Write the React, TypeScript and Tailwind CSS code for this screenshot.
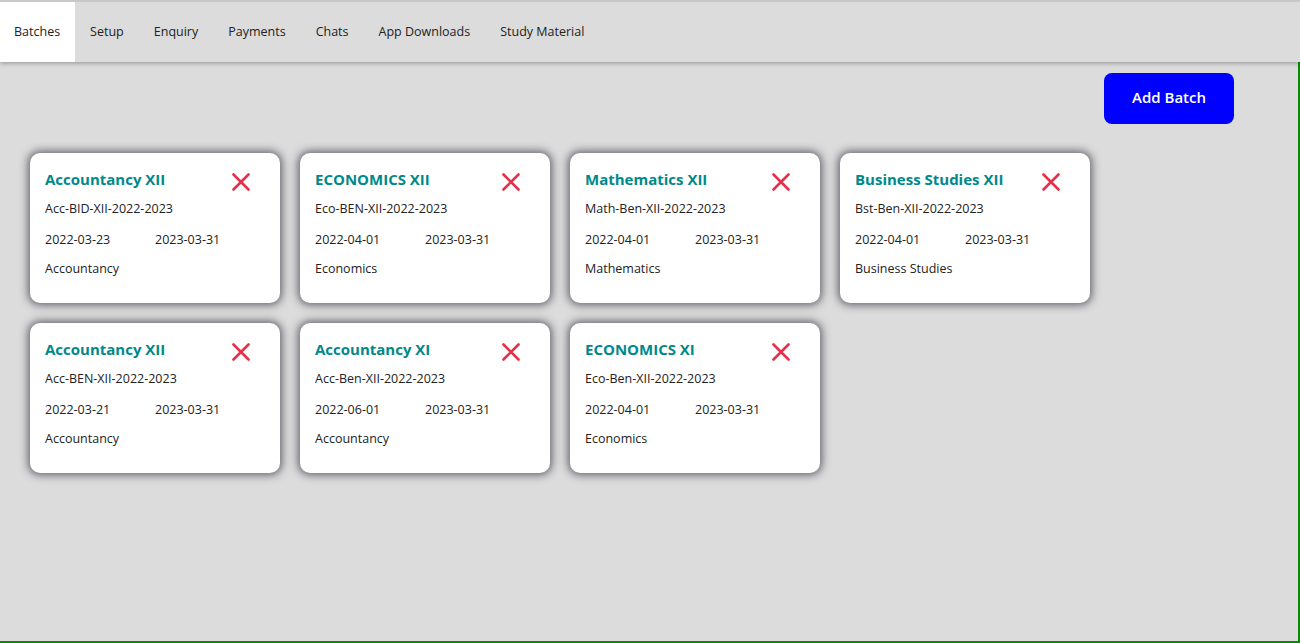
import React from "react";

const tabs = ["Batches", "Setup", "Enquiry", "Payments", "Chats", "App Downloads", "Study Material"];

const batches = [
  { title: "Accountancy XII", code: "Acc-BID-XII-2022-2023", start: "2022-03-23", end: "2023-03-31", subject: "Accountancy" },
  { title: "ECONOMICS XII", code: "Eco-BEN-XII-2022-2023", start: "2022-04-01", end: "2023-03-31", subject: "Economics" },
  { title: "Mathematics XII", code: "Math-Ben-XII-2022-2023", start: "2022-04-01", end: "2023-03-31", subject: "Mathematics" },
  { title: "Business Studies XII", code: "Bst-Ben-XII-2022-2023", start: "2022-04-01", end: "2023-03-31", subject: "Business Studies" },
  { title: "Accountancy XII", code: "Acc-BEN-XII-2022-2023", start: "2022-03-21", end: "2023-03-31", subject: "Accountancy" },
  { title: "Accountancy XI", code: "Acc-Ben-XII-2022-2023", start: "2022-06-01", end: "2023-03-31", subject: "Accountancy" },
  { title: "ECONOMICS XI", code: "Eco-Ben-XII-2022-2023", start: "2022-04-01", end: "2023-03-31", subject: "Economics" },
];

function Cross() {
  return (
    <svg width="18" height="18" viewBox="0 0 18 18" className="shrink-0 mt-[7px]">
      <path d="M1.5 1.5 L16.5 16.5 M16.5 1.5 L1.5 16.5" stroke="#e4304a" strokeWidth="2.6" strokeLinecap="round" />
    </svg>
  );
}

function BatchCard({ b }: { b: (typeof batches)[number] }) {
  return (
    <div className="w-[250px] h-[150px] bg-white rounded-[10px] shadow-[0_0_9px_2px_rgba(60,55,70,0.75)] px-[15px] pt-[13px] text-[12.5px] text-[#222]">
      <div className="flex items-center justify-between pr-[15px]">
        <span className="text-[15px] font-bold text-[#00898a] leading-[20px]">{b.title}</span>
        <Cross />
      </div>
      <div className="mt-[10px] leading-[16px]">{b.code}</div>
      <div className="mt-[15px] flex leading-[16px]">
        <span className="w-[110px]">{b.start}</span>
        <span>{b.end}</span>
      </div>
      <div className="mt-[13px] leading-[16px]">{b.subject}</div>
    </div>
  );
}

export default function App() {
  return (
    <div className="h-[643px] bg-[#dcdcdc] flex flex-col overflow-hidden" style={{ fontFamily: "'Open Sans', Lato, sans-serif" }}>
      <div className="h-[62px] shrink-0 flex items-stretch border-t-2 border-[#c8c8c8] bg-[#dcdcdc] shadow-[0_2px_4px_rgba(0,0,0,0.25)] relative z-10">
        {tabs.map((t, i) => (
          <div
            key={t}
            className={`flex items-center text-[12.5px] text-[#222] ${i === 0 ? "bg-white pl-[14px] pr-[15px]" : "px-[15px]"}`}
          >
            {t}
          </div>
        ))}
      </div>
      <div className="flex-1 flex flex-col border-r-2 border-b-2 border-[#0a8a0a]">
        <div className="flex justify-end pr-[64px] pt-[11px]">
          <button className="w-[130px] h-[51px] rounded-[8px] bg-[#0000ff] text-white text-[15px] font-semibold pb-[3px]">Add Batch</button>
        </div>
        <div className="grid grid-cols-[repeat(4,250px)] gap-[20px] pl-[30px] pt-[29px]">
          {batches.map((b, i) => (
            <BatchCard key={i} b={b} />
          ))}
        </div>
      </div>
    </div>
  );
}
